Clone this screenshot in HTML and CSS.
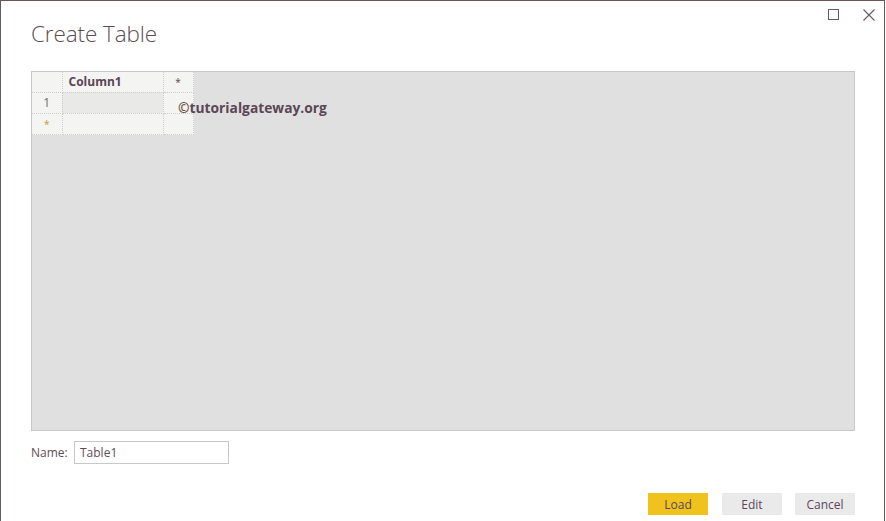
FILE: index.html
```html
<!DOCTYPE html>
<html>
<head>
<meta charset="utf-8">
<link rel="stylesheet" href="styles.css">
</head>
<body>
<div class="window">
  <div class="titlebar">
    <span class="ctl max"><svg width="11" height="11" viewBox="0 0 11 11"><rect x="0.5" y="0.5" width="10" height="10" fill="none" stroke="#6b575c" stroke-width="1"/></svg></span>
    <span class="ctl close"><svg width="12" height="12" viewBox="0 0 12 12"><path d="M0.5 0.5 L11.5 11.5 M11.5 0.5 L0.5 11.5" stroke="#6b575c" stroke-width="1.1" fill="none"/></svg></span>
  </div>
  <h1 class="title">Create Table</h1>
  <div class="gridarea">
    <table class="grid">
      <tr class="r0"><td class="rh"></td><td class="colname">Column1</td><td class="star">*</td></tr>
      <tr class="r1"><td class="rh">1</td><td class="sel"></td><td></td></tr>
      <tr class="r2"><td class="rh newrow">*</td><td></td><td></td></tr>
    </table>
    <div class="watermark"><span class="copy">©</span>tutorialgateway.org</div>
  </div>
  <div class="namerow">
    <label class="namelabel">Name:</label>
    <div class="nameinput">Table1</div>
  </div>
  <div class="buttons">
    <button class="btn primary">Load</button>
    <button class="btn">Edit</button>
    <button class="btn">Cancel</button>
  </div>
</div>
</body>
</html>
```

FILE: styles.css
```css
* { box-sizing: border-box; }
html, body { margin: 0; padding: 0; background: #ffffff; }
body { font-family: "Open Sans", "Noto Sans", sans-serif; color: #5e4c55; overflow: hidden; }

.window {
  width: 885px;
  height: 521px;
  border-left: 1px solid #6e5558;
  border-top: 1px solid #6e5558;
  border-right: 1px solid #6e5558;
  padding: 0 30px 0 30px;
  position: relative;
}

.titlebar {
  display: flex;
  justify-content: flex-end;
  align-items: flex-start;
  height: 20px;
  margin-right: -21px;
  padding-top: 8px;
  gap: 24px;
}
.ctl { display: block; line-height: 0; }

.title {
  margin: 0;
  font-weight: 300;
  font-size: 22.5px;
  line-height: 26px;
  height: 50px;
  color: #5e4c55;
  letter-spacing: -0.1px;
}

.gridarea {
  position: relative;
  width: 824px;
  height: 360px;
  background: #e0e0e0;
  border: 1px solid #c8c8c8;
}

.grid {
  border-collapse: collapse;
  background: #f4f4f3;
  font-size: 12px;
}
.grid td {
  border: 1px dotted #cdcdcd;
  padding: 0;
  height: 21px;
  vertical-align: middle;
}
.grid tr:first-child td { border-top: none; height: 20px; }
.grid td:first-child { border-left: none; }
.grid .rh { width: 30px; text-align: center; color: #6c6c6c; }
.grid .colname { width: 101px; font-weight: 700; padding-left: 6px; color: #5a4654; }
.grid .star { width: 30px; text-align: center; color: #5a4654; font-size: 10px; }
.grid .sel { background: #e9e9e8; }
.grid .newrow { color: #c89a2a; font-size: 10px; }

.watermark {
  position: absolute;
  left: 146px;
  top: 26px;
  font-family: "Open Sans", sans-serif;
  font-weight: 700;
  font-size: 13.8px;
  color: #5c4656;
}
.watermark .copy { color: #6a5640; }

.namerow {
  display: flex;
  align-items: center;
  margin-top: 10px;
  height: 23px;
}
.namelabel { font-size: 12px; width: 43px; color: #5e4c55; }
.nameinput {
  width: 155px;
  height: 23px;
  border: 1px solid #c8c8c8;
  font-size: 12px;
  padding-left: 5px;
  line-height: 21px;
  color: #5e4c55;
}

.buttons {
  display: flex;
  justify-content: flex-end;
  gap: 13px;
  margin-top: 29px;
  margin-right: -1px;
}
.btn {
  width: 60px;
  height: 22px;
  border: none;
  background: #eaeaea;
  font-family: "Open Sans", sans-serif;
  font-size: 12px;
  color: #5a4660;
  padding: 0;
}
.btn.primary { background: #f0c21e; margin-right: 1px; }
```
